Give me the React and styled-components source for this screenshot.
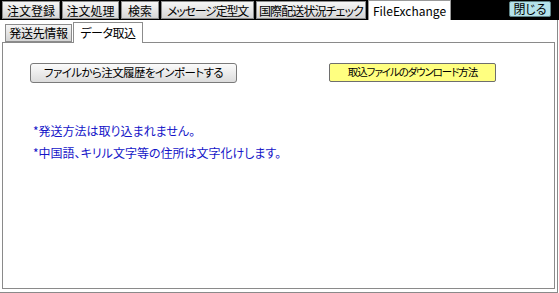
import React from "react";
import styled, { createGlobalStyle } from "styled-components";

const Global = createGlobalStyle`
  html, body { margin: 0; padding: 0; background: #fff; }
  body { font-family: "Noto Sans CJK JP", "Liberation Sans", sans-serif; }
  * { box-sizing: border-box; }
`;

const Window = styled.div`
  width: 559px;
  height: 293px;
  display: flex;
  flex-direction: column;
  background: #fff;
  font-family: "Noto Sans CJK JP", "Liberation Sans", sans-serif;
  font-feature-settings: "palt";
  font-size: 12px;
  color: #000;
`;

const TopStrip = styled.div`
  height: 20px;
  flex: none;
  display: flex;
  align-items: flex-end;
  background: #000;
  padding-left: 2px;
  gap: 2px;
`;

const TopTab = styled.div`
  height: ${(p) => (p.$active ? 20 : 18)}px;
  width: ${(p) => p.$w}px;
  margin-bottom: ${(p) => (p.$active ? 0 : 1)}px;
  display: flex;
  align-items: center;
  justify-content: center;
  line-height: 1;
  padding-top: ${(p) => (p.$active ? 0 : 1)}px;
  background: ${(p) =>
    p.$active ? "#fff" : "linear-gradient(#f6f6f6, #e6e6e6 50%, #d6d6d6)"};
  border: 1px solid ${(p) => (p.$active ? "#9a9a9a" : "#8c8c8c")};
  border-bottom: ${(p) => (p.$active ? "none" : "1px solid #8c8c8c")};
  font-size: 12px;
  letter-spacing: ${(p) => p.$ls || 0}px;
  white-space: nowrap;
  overflow: hidden;
`;

const CloseButton = styled.button`
  margin-left: auto;
  margin-right: 8px;
  align-self: flex-start;
  margin-top: 1px;
  width: 42px;
  height: 16px;
  padding: 0;
  background: #b4e2ea;
  border: 1px solid #5f8388;
  border-radius: 2px;
  font-family: inherit;
  font-feature-settings: "palt";
  font-size: 12px;
  line-height: 1;
  color: #000;
`;

const OuterPage = styled.div`
  flex: 1;
  width: 558px;
  border-right: 1px solid #8a8a8a;
  border-bottom: 1px solid #8a8a8a;
  padding: 1px 2px 3px 2px;
  display: flex;
  flex-direction: column;
`;

const InnerStrip = styled.div`
  height: 21px;
  flex: none;
  display: flex;
  align-items: flex-end;
  padding-left: 3px;
  gap: 1px;
`;

const InnerTab = styled.div`
  height: ${(p) => (p.$active ? 21 : 18)}px;
  width: ${(p) => p.$w}px;
  margin-bottom: ${(p) => (p.$active ? -1 : 0)}px;
  display: flex;
  align-items: center;
  justify-content: center;
  line-height: 1;
  background: ${(p) =>
    p.$active ? "#fff" : "linear-gradient(#f6f6f6, #e4e4e4 50%, #d4d4d4)"};
  border: 1px solid #8c8c8c;
  border-bottom: ${(p) => (p.$active ? "none" : "1px solid #8c8c8c")};
  font-size: 12px;
  letter-spacing: ${(p) => p.$ls || 0}px;
  position: relative;
  z-index: 1;
  white-space: nowrap;
`;

const InnerPage = styled.div`
  flex: 1;
  border: 1px solid #8a8a8a;
  padding: 20px 0 0 27px;
  display: flex;
  flex-direction: column;
`;

const ButtonRow = styled.div`
  display: flex;
  align-items: flex-start;
`;

const ImportButton = styled.button`
  width: 207px;
  height: 20px;
  padding: 0;
  background: linear-gradient(#fbfbfb, #ececec 50%, #dcdcdc);
  border: 1px solid #7a7a7a;
  border-radius: 3px;
  font-family: inherit;
  font-feature-settings: "palt";
  font-size: 11.5px;
  letter-spacing: -0.6px;
  line-height: 1;
  color: #000;
`;

const HelpButton = styled.button`
  margin-left: 92px;
  width: 167px;
  height: 19px;
  padding: 0;
  background: #ffff80;
  border: 1px solid #6e6e6e;
  border-radius: 2px;
  font-family: inherit;
  font-feature-settings: "palt";
  font-size: 10.5px;
  letter-spacing: -1.1px;
  line-height: 1;
  color: #000;
`;

const Notes = styled.div`
  margin-top: 41px;
  padding-left: 3px;
  display: flex;
  flex-direction: column;
  gap: 8px;
`;

const Note = styled.div`
  color: #1414c8;
  font-size: 12px;
  line-height: 14px;
`;

export default function App() {
  const topTabs = [
    { label: "注文登録", w: 58 },
    { label: "注文処理", w: 57 },
    { label: "検索", w: 38 },
    { label: "メッセージ定型文", w: 93, ls: -1.2 },
    { label: "国際配送状況チェック", w: 110, ls: -0.9 },
  ];
  return (
    <>
      <Global />
      <Window>
        <TopStrip>
          {topTabs.map((t) => (
            <TopTab key={t.label} $w={t.w} $ls={t.ls}>
              {t.label}
            </TopTab>
          ))}
          <TopTab $active $w={83}>
            FileExchange
          </TopTab>
          <CloseButton>閉じる</CloseButton>
        </TopStrip>
        <OuterPage>
          <InnerStrip>
            <InnerTab $w={67} $ls={-0.3}>
              発送先情報
            </InnerTab>
            <InnerTab $active $w={70} $ls={-0.5}>
              データ取込
            </InnerTab>
          </InnerStrip>
          <InnerPage>
            <ButtonRow>
              <ImportButton>ファイルから注文履歴をインポートする</ImportButton>
              <HelpButton>取込ファイルのダウンロード方法</HelpButton>
            </ButtonRow>
            <Notes>
              <Note>*発送方法は取り込まれません。</Note>
              <Note>*中国語、キリル文字等の住所は文字化けします。</Note>
            </Notes>
          </InnerPage>
        </OuterPage>
      </Window>
    </>
  );
}
